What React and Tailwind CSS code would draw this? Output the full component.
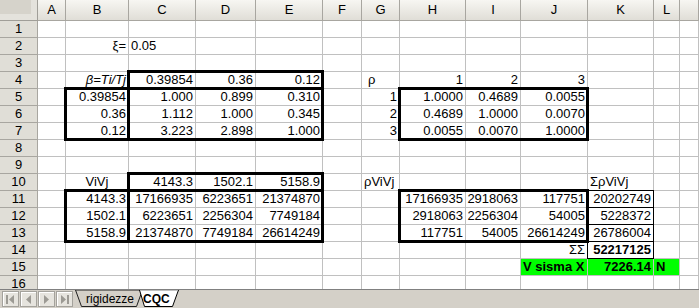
import React from 'react';

const COLS = ['A', 'B', 'C', 'D', 'E', 'F', 'G', 'H', 'I', 'J', 'K', 'L', 'M'];

const r = (v) => ({ v, a: 'r' });
const l = (v) => ({ v, a: 'l' });
const c = (v) => ({ v, a: 'c' });

const DATA = {
  2: { B: r('ξ='), C: l('0.05') },
  4: {
    B: { v: 'β=Ti/Tj', a: 'r', i: true },
    C: r('0.39854'),
    D: r('0.36'),
    E: r('0.12'),
    G: { v: 'ρ', a: 'l', ind: true },
    H: r('1'),
    I: r('2'),
    J: r('3'),
  },
  5: { B: r('0.39854'), C: r('1.000'), D: r('0.899'), E: r('0.310'), G: r('1'), H: r('1.0000'), I: r('0.4689'), J: r('0.0055') },
  6: { B: r('0.36'), C: r('1.112'), D: r('1.000'), E: r('0.345'), G: r('2'), H: r('0.4689'), I: r('1.0000'), J: r('0.0070') },
  7: { B: r('0.12'), C: r('3.223'), D: r('2.898'), E: r('1.000'), G: r('3'), H: r('0.0055'), I: r('0.0070'), J: r('1.0000') },
  10: { B: c('ViVj'), C: r('4143.3'), D: r('1502.1'), E: r('5158.9'), G: l('ρViVj'), K: l('ΣρViVj') },
  11: { B: r('4143.3'), C: r('17166935'), D: r('6223651'), E: r('21374870'), H: r('17166935'), I: r('2918063'), J: r('117751'), K: r('20202749') },
  12: { B: r('1502.1'), C: r('6223651'), D: r('2256304'), E: r('7749184'), H: r('2918063'), I: r('2256304'), J: r('54005'), K: r('5228372') },
  13: { B: r('5158.9'), C: r('21374870'), D: r('7749184'), E: r('26614249'), H: r('117751'), I: r('54005'), J: r('26614249'), K: r('26786004') },
  14: { J: r('ΣΣ'), K: { v: '52217125', a: 'r', b: true } },
  15: {
    J: { v: 'V sisma X', a: 'l', b: true, g: true },
    K: { v: '7226.14', a: 'r', b: true, g: true },
    L: { v: 'N', a: 'l', b: true, g: true },
  },
};

function Cell({ cell }) {
  const align = !cell ? '' : cell.a === 'r' ? 'justify-end' : cell.a === 'c' ? 'justify-center' : 'justify-start';
  return (
    <div
      className={`flex items-center whitespace-nowrap border-r border-b border-[#c0c0c0] px-[2px] text-[13px] leading-[16px] text-black ${align} ${
        cell && cell.g ? 'bg-[#00ff00]' : 'bg-white'
      } ${cell && cell.b ? 'font-bold' : ''} ${cell && cell.i ? 'italic' : ''} ${cell && cell.ind ? 'pl-[6px]' : ''}`}
    >
      {cell ? cell.v : ''}
    </div>
  );
}

function NavButton({ children }) {
  return (
    <div className="flex h-[16px] w-[17px] items-center justify-center border border-[#a4a29c] bg-[#e6e4de] shadow-[inset_1px_1px_0_#ffffff]">
      {children}
    </div>
  );
}

export default function App() {
  const rows = Array.from({ length: 16 }, (_, i) => i + 1);
  return (
    <div className="h-[308px] w-[699px] overflow-hidden bg-white font-['Liberation_Sans','Arial',sans-serif]">
      <div className="relative h-[289px] overflow-hidden">
        <div className="grid grid-cols-[38px_28px_63px_67px_60px_67px_39px_38px_66px_55px_67px_66px_26px_1fr] grid-rows-[21px_repeat(16,17px)]">
          <div className="border-r border-b border-[#a09e98] bg-[#d6d3cb] shadow-[inset_-6px_-6px_0_#e4e2dc]" />
          {COLS.map((col) => (
            <div
              key={col}
              className="flex items-center justify-center border-r border-b border-[#a8a6a0] bg-linear-to-b from-[#f7f6f2] to-[#e0ded7] text-[13px] leading-[16px] text-black"
            >
              {col === 'M' ? '' : col}
            </div>
          ))}
          {rows.map((row) => (
            <React.Fragment key={row}>
              <div className="flex items-center justify-center border-r border-b border-[#a8a6a0] bg-[#e0ded7] text-[13px] leading-[16px] text-black">
                {row}
              </div>
              {COLS.map((col) => (
                <Cell key={col} cell={DATA[row] ? DATA[row][col] : undefined} />
              ))}
            </React.Fragment>
          ))}
        </div>

        {/* thick range borders drawn over the grid */}
        <div className="pointer-events-none absolute left-[127px] top-[70px] h-[20px] w-[197px] border-[3px] border-black" />
        <div className="pointer-events-none absolute left-[64px] top-[87px] h-[54px] w-[66px] border-[3px] border-black" />
        <div className="pointer-events-none absolute left-[127px] top-[87px] h-[54px] w-[197px] border-[3px] border-black" />
        <div className="pointer-events-none absolute left-[398px] top-[87px] h-[54px] w-[191px] border-[3px] border-black" />
        <div className="pointer-events-none absolute left-[127px] top-[172px] h-[20px] w-[197px] border-[3px] border-black" />
        <div className="pointer-events-none absolute left-[64px] top-[189px] h-[54px] w-[66px] border-[3px] border-black" />
        <div className="pointer-events-none absolute left-[127px] top-[189px] h-[54px] w-[197px] border-[3px] border-black" />
        <div className="pointer-events-none absolute left-[398px] top-[189px] h-[54px] w-[191px] border-[3px] border-black" />
        {/* thin borders K11:K14 */}
        <div className="pointer-events-none absolute left-[587px] top-[190px] flex w-[67px] flex-col border-l border-t border-r border-black">
          <div className="h-[17px] border-b border-black" />
          <div className="h-[17px] border-b border-black" />
          <div className="h-[17px] border-b border-black" />
          <div className="h-[17px] border-b border-black" />
        </div>
      </div>

      <div className="flex h-[19px] border-t border-[#808080] bg-[#d4d0c8]">
        <div className="flex gap-[1px] pl-[2px] pt-[1px]">
          <NavButton>
            <svg width="9" height="9" viewBox="0 0 9 9">
              <rect x="0" y="0" width="2" height="9" fill="#9c9a94" />
              <polygon points="8,0 8,9 3,4.5" fill="#9c9a94" />
            </svg>
          </NavButton>
          <NavButton>
            <svg width="9" height="9" viewBox="0 0 9 9">
              <polygon points="7,0 7,9 2,4.5" fill="#9c9a94" />
            </svg>
          </NavButton>
          <NavButton>
            <svg width="9" height="9" viewBox="0 0 9 9">
              <polygon points="2,0 2,9 7,4.5" fill="#9c9a94" />
            </svg>
          </NavButton>
          <NavButton>
            <svg width="9" height="9" viewBox="0 0 9 9">
              <polygon points="1,0 1,9 6,4.5" fill="#9c9a94" />
              <rect x="7" y="0" width="2" height="9" fill="#9c9a94" />
            </svg>
          </NavButton>
        </div>
        <div className="ml-[1px] flex h-[18px] items-start">
          <div className="relative h-[18px] w-[69px] pl-[12px] pt-[2px] text-[12px] leading-[14px] text-black">
            <svg className="absolute left-0 top-0 -z-0" width="69" height="18" viewBox="0 0 69 18">
              <polygon points="1.5,0 7.5,16.5 62.5,16.5 68.5,0" fill="#d4d0c8" stroke="#202020" strokeWidth="1" />
            </svg>
            <span className="relative">rigidezze</span>
          </div>
          <div className="relative -ml-[4px] h-[18px] w-[41px] pl-[4px] pt-[2px] text-[12px] font-bold leading-[14px] text-black">
            <svg className="absolute left-0 top-0" width="41" height="18" viewBox="0 0 41 18">
              <polygon points="0.5,0 5.5,16.5 33.5,16.5 39.5,0" fill="#ffffff" stroke="#000000" strokeWidth="1" />
              <line x1="1" y1="0" x2="39" y2="0" stroke="#ffffff" strokeWidth="1" />
            </svg>
            <span className="relative">CQC</span>
          </div>
        </div>
      </div>
    </div>
  );
}
